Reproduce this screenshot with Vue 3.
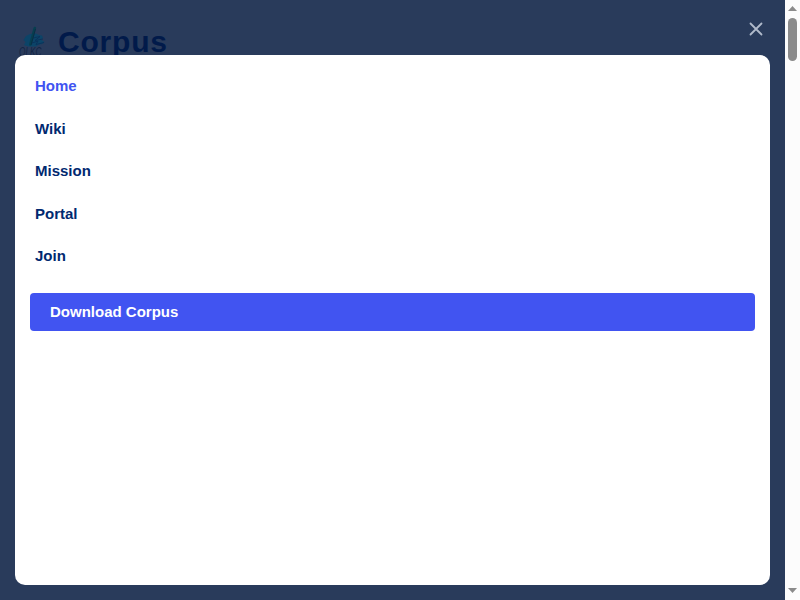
<script setup>
const links = ['Home', 'Wiki', 'Mission', 'Portal', 'Join']
</script>

<template>
  <div class="page">
    <div class="viewport">
      <header class="header">
        <svg class="mark" width="28" height="32" viewBox="0 0 28 32" aria-hidden="true">
          <path d="M4.5 14L7 10L11 8L17 7.5L20 9L23 9.5L24 12L22 13.5L25.5 16L23 18L20 18.5L17 20.5L9 20.5L5 19L6.5 16Z" fill="#0c4468" />
          <path d="M14 12L21 10.5L16 14.5L24 13M13 17L19 15L17 18.5L25 16.5" fill="none" stroke="#0a3159" stroke-width="0.9" />
          <path d="M11.3 18.5L15.8 2" fill="none" stroke="#063f50" stroke-width="2.6" stroke-linecap="round" />
          <path d="M12 19L16.5 3" fill="none" stroke="#0a2b43" stroke-width="0.8" />
          <text x="0" y="29.5" textLength="22.5" lengthAdjust="spacingAndGlyphs">OLKC</text>
        </svg>
        <span class="brand">Corpus</span>
      </header>
      <div class="overlay">
        <button class="close" aria-label="Close menu">
          <svg width="14" height="14" viewBox="0 0 14 14"><path d="M1.5 1.5L12.5 12.5M12.5 1.5L1.5 12.5" /></svg>
        </button>
        <nav class="menu">
          <a v-for="(link, i) in links" :key="link" class="link" :class="{ active: i === 0 }">{{ link }}</a>
          <a class="download">Download Corpus</a>
        </nav>
      </div>
    </div>
    <div class="scrollbar">
      <svg width="15" height="17" viewBox="0 0 15 17"><path d="M3 11L7.5 6L12 11Z" fill="#8b8b8b" /></svg>
      <div class="thumb"></div>
      <svg class="down" width="15" height="17" viewBox="0 0 15 17"><path d="M3 5L7.5 10L12 5Z" fill="#8b8b8b" /></svg>
    </div>
  </div>
</template>

<style>
body {
  overflow: hidden;
}
</style>

<style scoped>
.page {
  display: flex;
  width: 800px;
  height: 600px;
  font-family: "Liberation Sans", Arial, sans-serif;
}
.viewport {
  position: relative;
  flex: 1;
  background: #293b5b;
}
.header {
  display: flex;
  align-items: center;
  gap: 11px;
  height: 84px;
  padding-left: 19px;
}
.mark {
  margin-top: -1px;
  overflow: visible;
}
.mark text {
  font: italic 12.5px "Liberation Sans", sans-serif;
  fill: #142544;
}
.brand {
  font-size: 30px;
  font-weight: 700;
  letter-spacing: 0.8px;
  line-height: 36px;
  color: #011a4a;
}
.overlay {
  position: absolute;
  inset: 0;
  display: flex;
  flex-direction: column;
  padding: 0 15px 15px;
}
.close {
  display: flex;
  align-items: center;
  align-self: flex-end;
  height: 55px;
  padding: 0 7px 0 0;
  border: 0;
  background: none;
}
.close svg {
  margin-top: 3px;
  fill: none;
  stroke: #b0bacb;
  stroke-width: 1.8;
  stroke-linecap: round;
}
.menu {
  display: flex;
  flex: 1;
  flex-direction: column;
  padding: 10px 0;
  border-radius: 10px;
  background: #fff;
}
.link {
  padding: 10px 20px;
  font-size: 15px;
  font-weight: 700;
  line-height: 22.5px;
  color: #012970;
}
.link.active {
  color: #4154f1;
}
.download {
  margin: 15px 15px 0;
  padding: 8px 20px;
  border-radius: 4px;
  background: #4154f1;
  color: #fff;
  font-size: 15px;
  font-weight: 700;
  line-height: 22.5px;
}
.scrollbar {
  display: flex;
  flex-direction: column;
  align-items: center;
  width: 15px;
  background: #fcfcfc;
}
.thumb {
  width: 9px;
  height: 43px;
  margin-top: 1px;
  border-radius: 5px;
  background: #8b8b8b;
}
.down {
  margin-top: auto;
}
</style>
